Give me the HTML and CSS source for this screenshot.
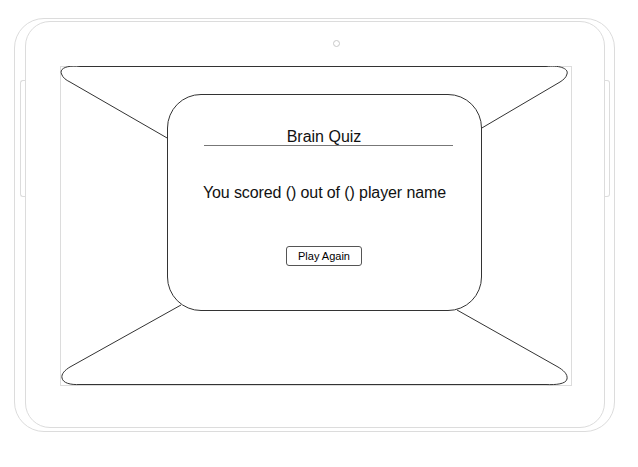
FILE: index.html
```html
<!DOCTYPE html>
<html lang="en">
<head>
<meta charset="utf-8">
<title>Brain Quiz</title>
<link rel="stylesheet" href="styles.css">
</head>
<body>
<div class="device">
  <div class="side side-left"></div>
  <div class="side side-right"></div>
  <div class="bezel">
    <div class="camera"></div>
    <div class="screen">
      <svg class="wire" width="512" height="320" viewBox="60 66 512 320" fill="none" stroke="#333" stroke-width="1">
        <path d="M80,66.5 L546,66.5"/>
        <path d="M80,66.5 C68,65 59,68 61.5,74 C63,78 66,80 70,82 L168,138.5"/>
        <path d="M546,66.5 C558,65 569,68 567,74 C566,78 563,80 560,82 L481,128.5"/>
        <path d="M181,305 L70,367 C65,370 61,374 62,378 C63,383 70,385 80,384.5 L546,384.5 C556,385 566,384 567,379 C568,374 563,370 558,367 L457,310"/>
      </svg>
      <div class="card">
        <h1 class="title">Brain Quiz</h1>
        <p class="score">You scored () out of () player name</p>
        <button class="btn" type="button">Play Again</button>
      </div>
    </div>
  </div>
</div>
</body>
</html>
```
FILE: styles.css
```css
html, body {
  margin: 0;
  padding: 0;
  background: #fff;
}
body {
  font-family: "Liberation Sans", Arial, sans-serif;
  color: #111;
}
.device {
  position: relative;
  box-sizing: border-box;
  margin: 18px 0 0 14px;
  width: 601px;
  height: 414px;
  border: 1px solid #dcdcdc;
  border-radius: 30px;
  padding: 2px 9px 3px 10px;
}
.side {
  position: absolute;
  top: 61px;
  width: 5px;
  height: 117px;
  box-sizing: border-box;
  border: 1px solid #dcdcdc;
}
.side-left {
  left: 5px;
  border-right: none;
  border-radius: 3px 0 0 3px;
}
.side-right {
  left: 590px;
  border-left: none;
  border-radius: 0 3px 3px 0;
}
.bezel {
  box-sizing: border-box;
  height: 100%;
  border: 1px solid #dcdcdc;
  border-radius: 25px;
  display: flex;
  flex-direction: column;
}
.camera {
  box-sizing: border-box;
  width: 7px;
  height: 7px;
  margin: 18px 0 0 307px;
  border: 1px solid #c8c8c8;
  border-radius: 50%;
}
.screen {
  position: relative;
  box-sizing: border-box;
  width: 512px;
  height: 320px;
  margin: 19px 0 0 34px;
  border: 1px solid #dcdcdc;
  display: flex;
  align-items: flex-start;
}
.wire {
  position: absolute;
  left: -1px;
  top: -1px;
}
.card {
  position: relative;
  z-index: 1;
  box-sizing: border-box;
  width: 315px;
  height: 217px;
  margin: 27px 0 0 106px;
  background: #fff;
  border: 1px solid #333;
  border-radius: 34px;
  display: flex;
  flex-direction: column;
  align-items: flex-start;
}
.title {
  box-sizing: border-box;
  margin: 33px 0 0 36px;
  width: 249px;
  padding-right: 9px;
  font-size: 16px;
  font-weight: normal;
  line-height: 17px;
  text-align: center;
  border-bottom: 1px solid #777;
}
.score {
  margin: 38px 0 0 0;
  width: 100%;
  font-size: 16px;
  line-height: 18px;
  letter-spacing: -0.1px;
  text-align: center;
}
.btn {
  box-sizing: border-box;
  margin: 44px 0 0 118px;
  width: 76px;
  height: 20px;
  padding: 0;
  font-family: "Liberation Sans", Arial, sans-serif;
  font-size: 11px;
  color: #000;
  background: #fff;
  border: 1px solid #555;
  border-radius: 3px;
}
```
